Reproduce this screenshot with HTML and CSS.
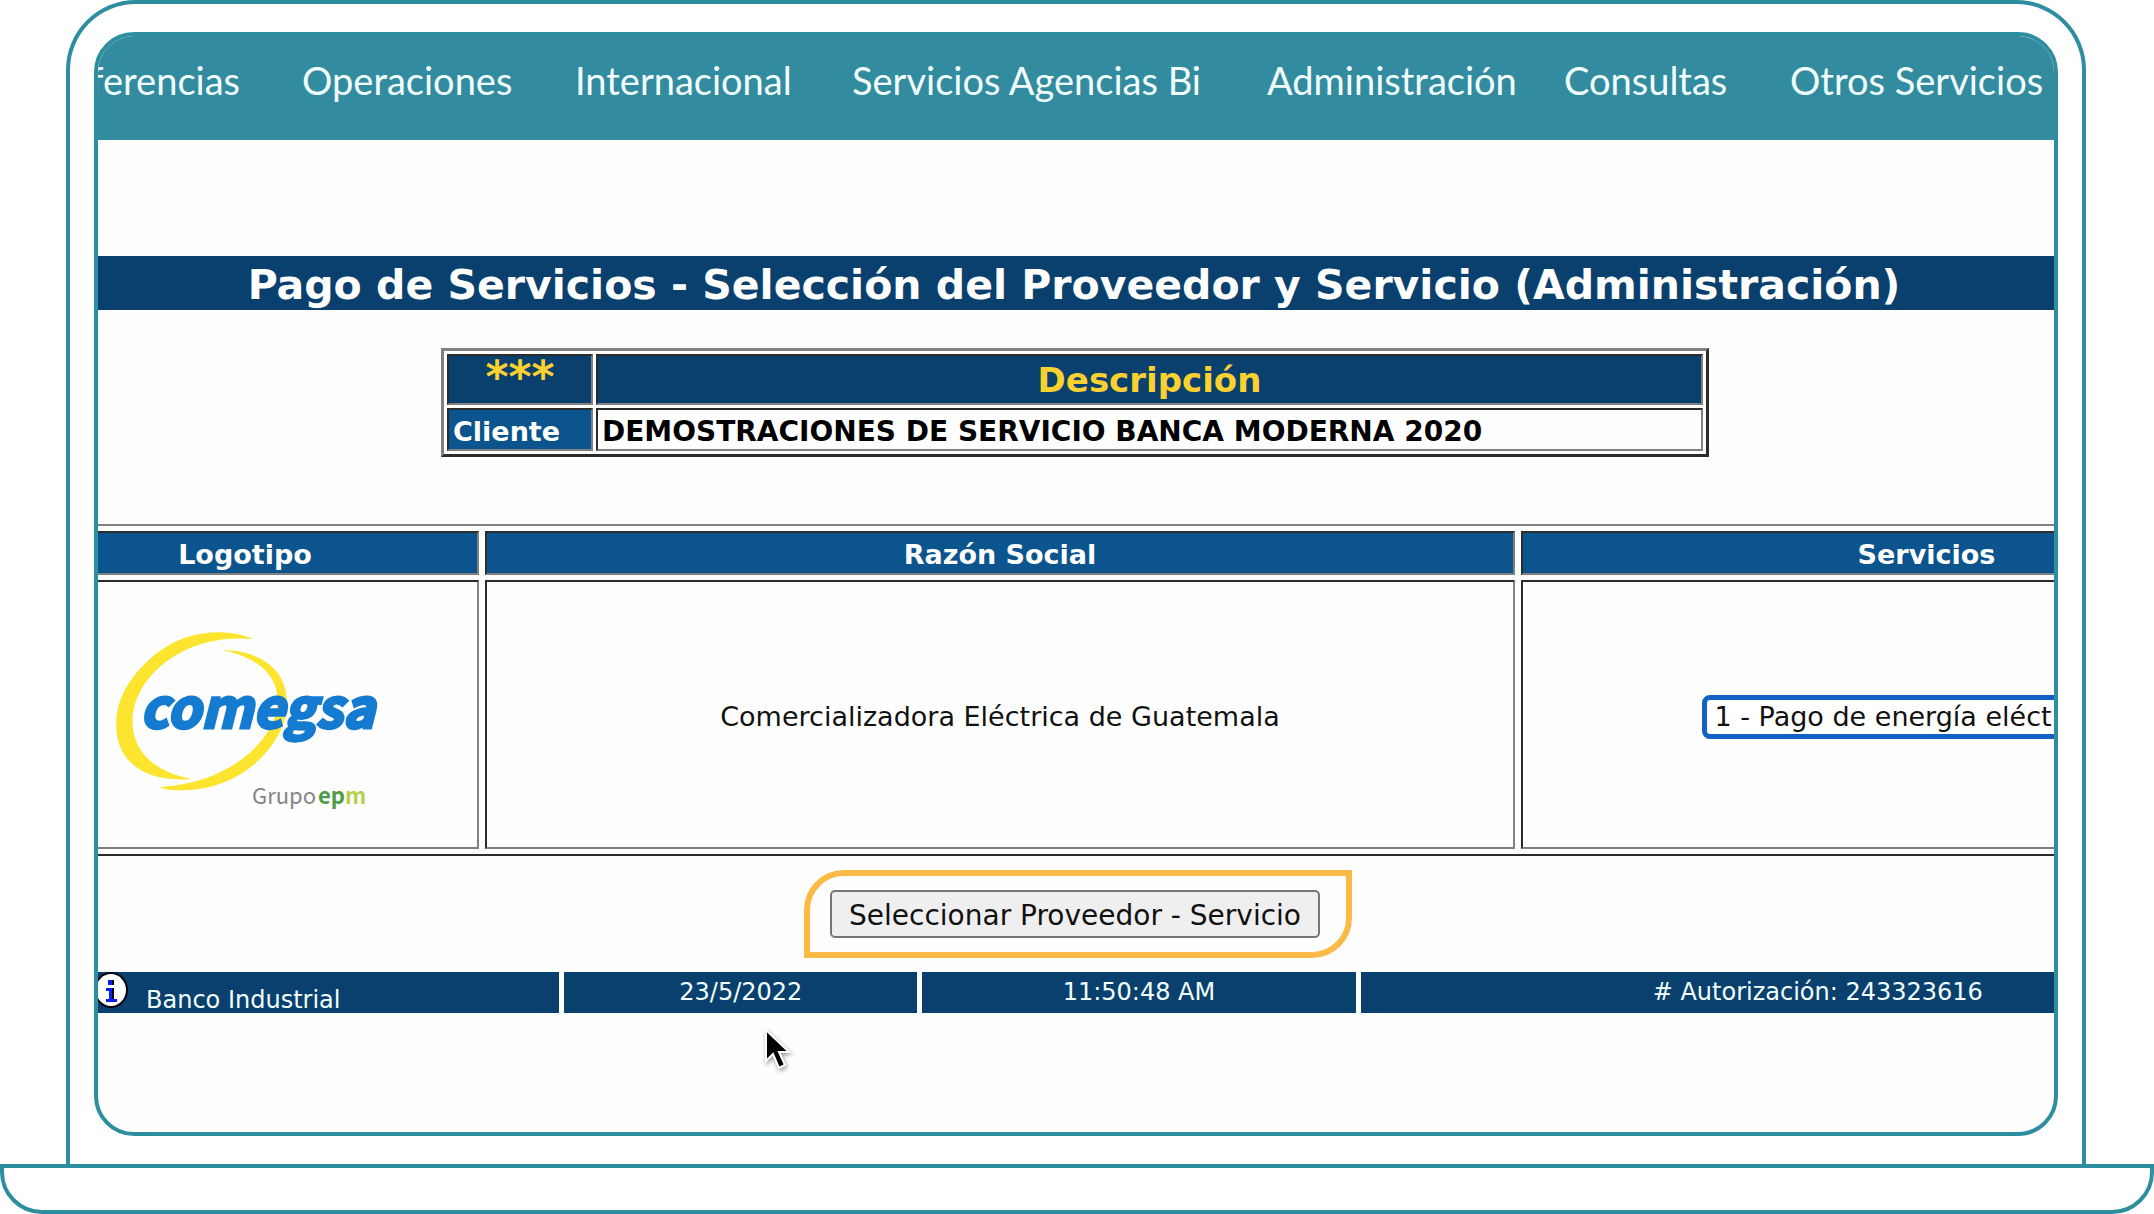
FILE: index.html
```html
<!DOCTYPE html>
<html lang="es">
<head>
<meta charset="utf-8">
<meta name="viewport" content="width=device-width, initial-scale=1">
<title>Pago de Servicios</title>
<link rel="stylesheet" href="styles.css">
</head>
<body>
<div class="laptop">
  <div class="lid">
    <main class="screen">
      <nav class="menu">
        <a class="menu-link menu-link-cut" href="#">Transferencias</a>
        <a class="menu-link" href="#">Operaciones</a>
        <a class="menu-link" href="#">Internacional</a>
        <a class="menu-link" href="#">Servicios Agencias Bi</a>
        <a class="menu-link" href="#">Administración</a>
        <a class="menu-link" href="#">Consultas</a>
        <a class="menu-link" href="#">Otros Servicios</a>
      </nav>

      <h1 class="title">Pago de Servicios - Selección del Proveedor y Servicio (Administración)</h1>

      <table class="client">
        <colgroup><col class="client-key"><col></colgroup>
        <thead>
          <tr><th class="stars" scope="col">***</th><th scope="col">Descripción</th></tr>
        </thead>
        <tbody>
          <tr><th scope="row">Cliente</th><td>DEMOSTRACIONES DE SERVICIO BANCA MODERNA 2020</td></tr>
        </tbody>
      </table>

      <table class="providers">
        <colgroup><col class="col-logo"><col class="col-name"><col></colgroup>
        <thead>
          <tr><th scope="col">Logotipo</th><th scope="col">Razón Social</th><th scope="col" id="servicios">Servicios</th></tr>
        </thead>
        <tbody>
          <tr>
            <td>
              <svg class="logo" viewBox="0 0 270 200" role="img" aria-label="Comegsa Grupo epm">
                <path fill="#fde52f" d="M143 22C118 11 78 12 47 36C14 62 1 93 8 123C15 151 42 165 82 162C50 156 27 140 23 112C19 83 38 54 68 37C93 23 118 20 143 22Z"/>
                <path fill="#fde52f" d="M112 33C144 33 177 48 177 86C177 126 133 171 78 173C62 174 52 172 50 170C106 167 150 138 164 102C177 64 152 41 112 33Z"/>
                <text class="logo-name" x="30" y="111">comegsa</text>
                <text class="logo-group" x="142" y="187">Grupo</text>
                <text class="logo-epm" x="208" y="187">ep<tspan class="logo-m">m</tspan></text>
              </svg>
            </td>
            <td>Comercializadora Eléctrica de Guatemala</td>
            <td>
              <select class="service" aria-labelledby="servicios">
                <option>1 - Pago de energía eléctrica</option>
              </select>
            </td>
          </tr>
        </tbody>
      </table>

      <div class="action">
        <button class="submit" type="button">Seleccionar Proveedor - Servicio</button>
      </div>

      <footer class="status">
        <div class="status-cell status-bank">
          <svg class="info" viewBox="0 0 34 36" aria-hidden="true">
            <ellipse cx="17" cy="18" rx="16" ry="17" fill="#fff" stroke="#04040c" stroke-width="2"/>
            <path fill="#0d1cf5" d="M14 8h6v5h-6zM12 16h8v11h3v3H12v-3h3v-8h-3z"/>
            <path fill="#04040c" d="M18 8h2v5h-2zM18 16h2v11h-2z"/>
          </svg>
          <span>Banco Industrial</span>
        </div>
        <div class="status-cell">23/5/2022</div>
        <div class="status-cell">11:50:48 AM</div>
        <div class="status-cell"># Autorización: 243323616</div>
      </footer>

      <svg class="pointer" viewBox="0 0 30 46" aria-hidden="true">
        <path fill="#000" stroke="#fff" stroke-width="2" d="M3 3V34L10 27L16 41L22 38L16 25H26Z"/>
      </svg>
    </main>
  </div>
  <div class="base"></div>
</div>
</body>
</html>
```
FILE: styles.css
```css
* {
  box-sizing: border-box;
}

body {
  margin: 0;
  background: #fff;
  color: #111;
  font-family: "DejaVu Sans", Verdana, sans-serif;
  font-size: 27px;
}

/* Laptop drawing */
.laptop {
  display: flex;
  flex-direction: column;
  min-height: 100vh;
}

.lid {
  display: flex;
  flex: 1;
  margin: 0 68px 0 66px;
  padding: 28px 24px;
  border: 4px solid #2c8e9f;
  border-bottom: 0;
  border-radius: 70px 70px 0 0;
}

.base {
  height: 50px;
  border: 4px solid #2c8e9f;
  border-radius: 0 0 42px 42px;
}

.screen {
  position: relative;
  display: flex;
  flex: 1;
  flex-direction: column;
  min-width: 0;
  overflow: hidden;
  border: 4px solid #2c8e9f;
  border-radius: 40px;
  background: #fefefe;
}

/* Top menu */
.menu {
  display: grid;
  grid-template-columns: 204fr 273fr 277fr 415fr 297fr 226fr 264fr;
  height: 104px;
  padding-top: 20px;
  background: #338b9f;
}

.menu-link {
  min-width: 0;
  color: #f2ffff;
  font-family: Lato, sans-serif;
  font-size: 38px;
  line-height: 48px;
  text-decoration: none;
  white-space: nowrap;
}

.menu-link-cut {
  display: flex;
  justify-content: flex-end;
  padding-right: 62px;
}

.title {
  margin: 116px 0 0;
  padding: 4px 4px 0 0;
  background: #0a406d;
  color: #fff;
  font-size: 41px;
  line-height: 50px;
  text-align: center;
  white-space: nowrap;
}

/* Tables with bevelled borders */
table {
  border-collapse: separate;
  table-layout: fixed;
}

th,
td {
  padding: 4px 0 0;
  border: 2px solid;
  border-color: #2c2c2c #808080 #808080 #2c2c2c;
}

th {
  background: #0b548d;
  color: #fff;
}

.client {
  align-self: center;
  width: 1268px;
  max-width: 100%;
  margin: 38px 2px 0 0;
  border: 3px solid;
  border-color: #808080 #2c2c2c #2c2c2c #808080;
  border-spacing: 3px;
}

.client-key {
  width: 146px;
}

.client thead th {
  height: 51px;
  padding: 0;
  background: #0a406d;
  color: #fbd12f;
  font-size: 34px;
  line-height: 40px;
}

.client thead .stars {
  padding-bottom: 6px;
  font-size: 44px;
}

.client tbody th,
.client td {
  height: 43px;
  padding-left: 4px;
  line-height: 32px;
  text-align: left;
  white-space: nowrap;
}

.client td {
  color: #000;
  font-size: 28px;
  font-weight: bold;
}

.providers {
  width: calc(100% + 381px);
  margin: 67px 0 0 -95px;
  border: 2px solid;
  border-color: #808080 #2c2c2c #2c2c2c #808080;
  border-spacing: 6px 5px;
  text-align: center;
}

.col-logo {
  width: 468px;
}

.col-name {
  width: 1030px;
}

.providers th {
  height: 44px;
  line-height: 32px;
}

.providers td {
  height: 269px;
}

.logo {
  display: block;
  width: 270px;
  height: 200px;
  margin: 0 auto;
}

.logo-name {
  fill: #147bd1;
  stroke: #147bd1;
  stroke-width: 3px;
  font: italic bold 54px "Noto Sans CJK SC", sans-serif;
}

.logo-group,
.logo-epm {
  fill: #858585;
  font: 22px "Noto Sans CJK SC", sans-serif;
}

.logo-epm {
  fill: #4a9c45;
  font-weight: bold;
}

.logo-m {
  fill: #b6cf4e;
}

.service {
  width: 450px;
  height: 44px;
  padding: 0 8px;
  border: 5px solid #1261c7;
  border-radius: 8px;
  appearance: none;
  background: #fff;
  color: #111;
  font: inherit;
  line-height: 34px;
}

/* Highlighted action */
.action {
  align-self: center;
  margin: 14px 0 0 4px;
  padding: 14px 26px 14px 20px;
  border: 6px solid #fbb945;
  border-radius: 40px 0;
}

.submit {
  display: block;
  width: 490px;
  height: 48px;
  padding: 2px 0 0;
  border: 2px solid #777;
  border-radius: 5px;
  background: #efefef;
  color: #111;
  font: inherit;
  font-size: 28px;
  white-space: nowrap;
}

/* Status strip */
.status {
  display: grid;
  grid-template-columns: 465fr 353fr 433fr 914fr;
  gap: 5px;
  margin: 14px -221px 0 -4px;
  color: #f2ffff;
  font-size: 24px;
  line-height: 40px;
  text-align: center;
}

.status-cell {
  height: 41px;
  background: #0a406d;
}

.status-bank {
  display: flex;
  align-items: flex-start;
  gap: 18px;
  line-height: 56px;
}

.info {
  width: 34px;
  height: 36px;
}

.pointer {
  position: absolute;
  top: 991px;
  left: 34%;
  width: 30px;
  height: 46px;
  filter: drop-shadow(1px 2px 2px #0006);
}
```
